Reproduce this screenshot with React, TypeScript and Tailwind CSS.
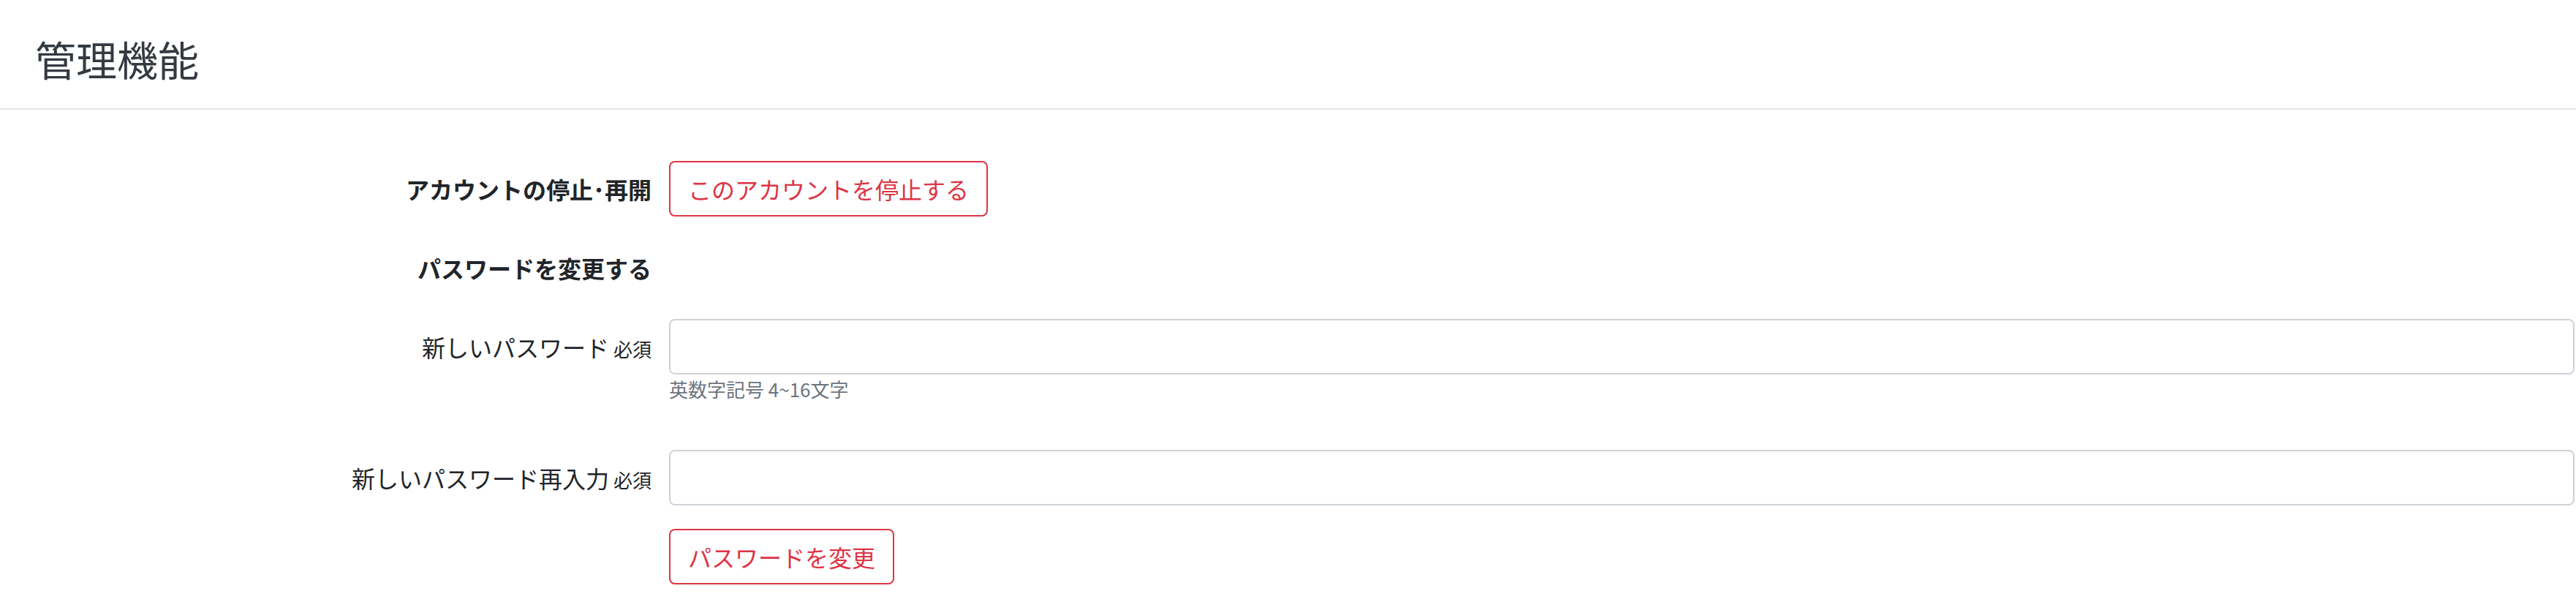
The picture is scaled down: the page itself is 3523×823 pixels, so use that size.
import React from 'react'

const FONT = { fontFamily: '"Noto Sans CJK JP", "Noto Sans", sans-serif' }

function Required() {
  return <small className="ml-[6px] text-[26px] leading-none">必須</small>
}

export default function App() {
  return (
    <div className="min-h-screen w-full bg-white text-[#212529]" style={FONT}>
      <header className="border-b-2 border-[#e5e5e5] pb-[35px] pl-12 pt-[46px]">
        <h1 className="text-[56px] font-normal leading-[1.2] text-[#343a40]">管理機能</h1>
      </header>

      <main className="pr-[2px] pt-[70px]">
        {/* account suspend / resume */}
        <div className="mb-8 grid grid-cols-[891px_1fr] items-center gap-x-6">
          <div className="text-right text-[32px] font-bold leading-[48px]">アカウントの停止･再開</div>
          <div>
            <button className="rounded-[8px] border-2 border-[#dc3545] px-6 py-3 text-[32px] leading-[48px] text-[#dc3545]">
              このアカウントを停止する
            </button>
          </div>
        </div>

        <div className="mb-8 grid grid-cols-[891px_1fr] gap-x-6">
          <div className="py-[14px] text-right text-[32px] font-bold leading-[48px]">パスワードを変更する</div>
          <div />
        </div>

        {/* new password */}
        <div className="mb-[68px] grid grid-cols-[891px_1fr] gap-x-6">
          <label className="py-[14px] text-right text-[32px] leading-[48px]">
            新しいパスワード<Required />
          </label>
          <div>
            <input
              type="password"
              className="block h-[76px] w-full rounded-[8px] border-2 border-[#ced4da] bg-white px-6 text-[32px] outline-none"
            />
            <div className="mt-1 text-[26px] leading-[1.2] text-[#6c757d]">英数字記号 4~16文字</div>
          </div>
        </div>

        <div className="mb-8 grid grid-cols-[891px_1fr] gap-x-6">
          <label className="py-[14px] text-right text-[32px] leading-[48px]">
            新しいパスワード再入力<Required />
          </label>
          <input
            type="password"
            className="block h-[76px] w-full rounded-[8px] border-2 border-[#ced4da] bg-white px-6 text-[32px] outline-none"
          />
        </div>

        <div className="grid grid-cols-[891px_1fr] gap-x-6">
          <div />
          <div>
            <button className="rounded-[8px] border-2 border-[#dc3545] px-6 py-3 text-[32px] leading-[48px] text-[#dc3545]">
              パスワードを変更
            </button>
          </div>
        </div>
      </main>
    </div>
  )
}
